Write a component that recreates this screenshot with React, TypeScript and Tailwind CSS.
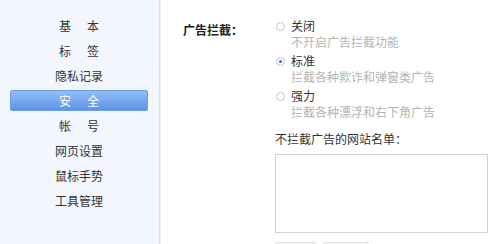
const menu = [
  { label: ["基", "本"] },
  { label: ["标", "签"] },
  { label: ["隐私记录"] },
  { label: ["安", "全"], active: true },
  { label: ["帐", "号"] },
  { label: ["网页设置"] },
  { label: ["鼠标手势"] },
  { label: ["工具管理"] },
];

const options = [
  { title: "关闭", desc: "不开启广告拦截功能" },
  { title: "标准", desc: "拦截各种欺诈和弹窗类广告", checked: true },
  { title: "强力", desc: "拦截各种漂浮和右下角广告" },
];

function Radio({ checked }: { checked?: boolean }) {
  return (
    <span className="flex h-[9px] w-[9px] shrink-0 items-center justify-center rounded-full border border-[#c4c4c4] bg-white">
      {checked && <span className="h-[3px] w-[3px] rounded-full bg-[#2f6fd6]" />}
    </span>
  );
}

export default function App() {
  return (
    <div
      className="flex h-[244px] w-[500px] overflow-hidden bg-white text-[12px] text-[#333]"
      style={{ fontFamily: '"Noto Sans CJK SC", "Noto Sans", sans-serif' }}
    >
      <aside className="w-[160px] shrink-0 border-r border-[#d9dde4] bg-[#f3f6fd] pt-[13px] shadow-[1px_0_0_#eef0f3]">
        {menu.map((m, i) => (
          <div key={i} className="flex h-[25px] items-center">
            <div
              className={
                m.active
                  ? "ml-[10px] flex h-[21px] w-[138px] items-center justify-center rounded-[2px] border border-[#6a9de6] bg-gradient-to-b from-[#93bff6] to-[#5c93e6] text-white"
                  : "ml-[10px] flex h-[21px] w-[138px] items-center justify-center"
              }
            >
              {m.label.length === 2 ? (
                <span className="flex gap-[16px]">
                  <span>{m.label[0]}</span>
                  <span>{m.label[1]}</span>
                </span>
              ) : (
                <span>{m.label[0]}</span>
              )}
            </div>
          </div>
        ))}
      </aside>

      <main className="flex flex-1 pl-[23px] pt-[18px]">
        <div className="w-[92px] shrink-0 pt-[4px] font-bold leading-[16px] text-[#222]">广告拦截：</div>
        <div className="flex flex-col">
          <div className="flex shrink-0 flex-col gap-[3px]">
            {options.map((o) => (
              <div key={o.title}>
                <div className="flex h-[16px] items-center gap-[6px] pl-[1px]">
                  <Radio checked={o.checked} />
                  <span className="leading-[16px]">{o.title}</span>
                </div>
                <div className="h-[16px] pl-[16px] leading-[16px] text-[#b4b4b4]">{o.desc}</div>
              </div>
            ))}
          </div>
          <div className="mt-[11px] h-[16px] shrink-0 leading-[16px]">不拦截广告的网站名单：</div>
          <textarea className="mt-[7px] h-[79px] w-[213px] shrink-0 resize-none border border-[#cfd2d6] bg-white outline-none" />
          <div className="mt-[9px] flex shrink-0 gap-[7px]">
            <button className="h-[22px] w-[41px] rounded-[2px] border border-[#dcdcdc] bg-[#f7f7f7]" />
            <button className="h-[22px] w-[46px] rounded-[2px] border border-[#dcdcdc] bg-[#f7f7f7]" />
          </div>
        </div>
      </main>
    </div>
  );
}
